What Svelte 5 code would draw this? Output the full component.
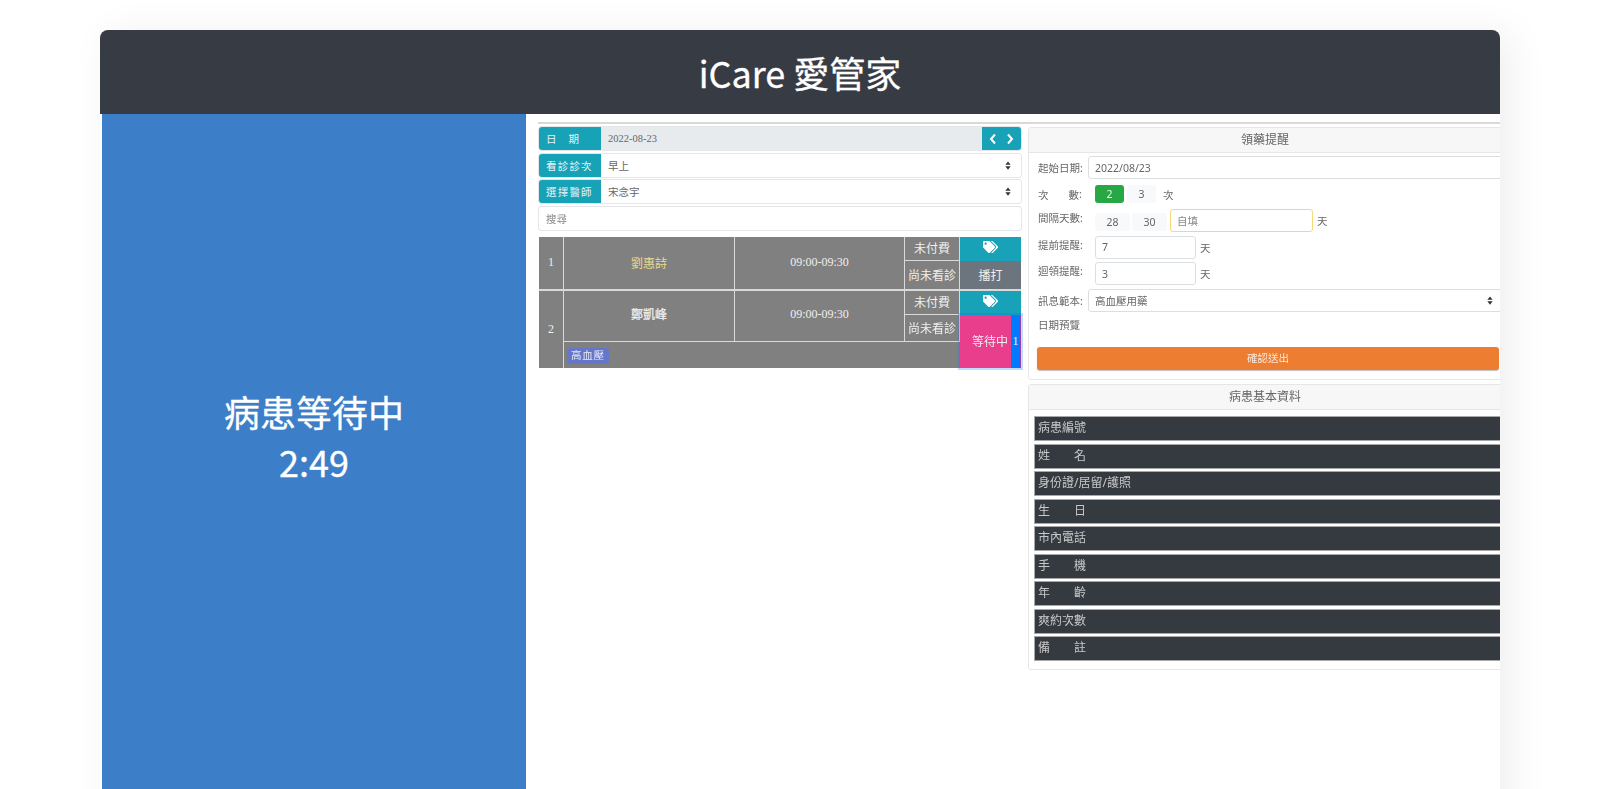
<script>
    const patientRows = ["病患編號", "姓名", "身份證/居留/護照", "生日", "市內電話", "手機", "年齡", "爽約次數", "備註"];
    const tagPath = "M497.941 225.941L286.059 14.059A48 48 0 0 0 252.118 0H48C21.49 0 0 21.49 0 48v204.118a48 48 0 0 0 14.059 33.941l211.882 211.882c18.744 18.745 49.136 18.746 67.882 0l204.118-204.118c18.745-18.745 18.745-49.137 0-67.882zM112 160c-26.51 0-48-21.49-48-48s21.49-48 48-48 48 21.49 48 48-21.49 48-48 48zm513.941 133.823L421.823 497.941c-18.745 18.745-49.137 18.745-67.882 0l-.36-.36L527.64 323.522c16.999-16.999 26.36-39.6 26.36-63.64s-9.362-46.641-26.36-63.64L331.397 0h48.721a48 48 0 0 1 33.941 14.059l211.882 211.882c18.745 18.745 18.745 49.137 0 67.882z";
</script>

{#snippet updown()}
    <svg class="updown" viewBox="0 0 8 12"><path d="M4 0.5 7.5 5H.5zM4 11.500 .5 7h7z" /></svg>
{/snippet}

{#snippet tags()}
    <svg class="tags" viewBox="0 0 640 512"><path d={tagPath} /></svg>
{/snippet}

<div class="page">
    <div class="card">
        <header class="title">iCare 愛管家</header>
        <div class="body">
            <aside class="status">
                <div>病患等待中</div>
                <div>2:49</div>
            </aside>
            <main class="shot">
                <div class="rule"></div>
                <div class="columns">
                    <section class="left">
                        <div class="group">
                            <span class="addon"><span class="just">日期</span></span>
                            <span class="value readonly serif">2022-08-23</span>
                            <span class="arrows">
                                <svg viewBox="0 0 8 12"><path d="M6 1.500 2 6l4 4.500" /></svg>
                                <svg viewBox="0 0 8 12"><path d="M2 1.500 6 6l-4 4.500" /></svg>
                            </span>
                        </div>
                        <div class="group">
                            <span class="addon spaced">看診診次</span>
                            <span class="value">早上 {@render updown()}</span>
                        </div>
                        <div class="group">
                            <span class="addon spaced">選擇醫師</span>
                            <span class="value">宋念宇 {@render updown()}</span>
                        </div>
                        <div class="group search">搜尋</div>

                        <table>
                            <colgroup>
                                <col style="width:25px" /><col style="width:171px" /><col style="width:170px" /><col style="width:55px" /><col style="width:61px" />
                            </colgroup>
                            <tbody>
                                <tr class="r1">
                                    <td rowspan="2">1</td>
                                    <td rowspan="2" class="vip">劉惠詩</td>
                                    <td rowspan="2">09:00-09:30</td>
                                    <td>未付費</td>
                                    <td class="teal">{@render tags()}</td>
                                </tr>
                                <tr class="r2">
                                    <td>尚未看診</td>
                                    <td class="call">播打</td>
                                </tr>
                                <tr class="r3">
                                    <td rowspan="3" class="plain">2</td>
                                    <td rowspan="2" class="strong">鄭凱峰</td>
                                    <td rowspan="2" class="lifted">09:00-09:30</td>
                                    <td>未付費</td>
                                    <td class="teal">{@render tags()}</td>
                                </tr>
                                <tr class="r4">
                                    <td>尚未看診</td>
                                    <td rowspan="2" class="waiting">
                                        <span class="wait-text">等待中</span>
                                        <span class="count">1</span>
                                    </td>
                                </tr>
                                <tr class="r5">
                                    <td colspan="3" class="note"><span class="pill">高血壓</span></td>
                                </tr>
                            </tbody>
                        </table>
                    </section>

                    <section class="right">
                        <div class="panel">
                            <div class="panel-head">領藥提醒</div>
                            <div class="form">
                                <div class="field date">
                                    <span class="lbl">起始日期:</span>
                                    <span class="box grow">2022/08/23</span>
                                </div>
                                <div class="field times">
                                    <span class="lbl"><span class="just">次數</span>:</span>
                                    <span class="chip on">2</span>
                                    <span class="chip">3</span>
                                    <span class="unit">次</span>
                                </div>
                                <div class="field gap">
                                    <span class="lbl">間隔天數:</span>
                                    <span class="chip wide">28</span>
                                    <span class="chip wide">30</span>
                                    <span class="box custom">自填</span>
                                    <span class="unit">天</span>
                                </div>
                                <div class="field short">
                                    <span class="lbl">提前提醒:</span>
                                    <span class="box days">7</span>
                                    <span class="unit">天</span>
                                </div>
                                <div class="field short">
                                    <span class="lbl">迴領提醒:</span>
                                    <span class="box days">3</span>
                                    <span class="unit">天</span>
                                </div>
                                <div class="field date">
                                    <span class="lbl">訊息範本:</span>
                                    <span class="box grow sel">高血壓用藥 {@render updown()}</span>
                                </div>
                                <div class="preview">日期預覽</div>
                                <div class="submit">確認送出</div>
                            </div>
                        </div>

                        <div class="panel second">
                            <div class="panel-head">病患基本資料</div>
                            <ul class="info">
                                {#each patientRows as row}
                                    <li>
                                        {#if row.length === 2}
                                            <span class="just">{row}</span>
                                        {:else}
                                            {row}
                                        {/if}
                                    </li>
                                {/each}
                            </ul>
                        </div>
                    </section>
                </div>
            </main>
        </div>
    </div>
</div>

<style>
    :global(html), :global(body) {
        margin: 0;
        background: #fff;
    }

    .page {
        height: 789px;
        overflow: hidden;
        padding: 30px 100px 0;
        box-sizing: border-box;
        font-family: "Noto Sans CJK TC", "Noto Sans", sans-serif;
    }

    .card {
        height: 800px;
        background: #fff;
        border-radius: 8px 8px 0 0;
        box-shadow: 10px 4px 40px rgba(0, 0, 0, 0.07);
    }

    .title {
        height: 84px;
        background: #373b43;
        color: #fff;
        border-radius: 8px 8px 0 0;
        font-size: 36px;
        -webkit-text-stroke: 0.3px #fff;
        line-height: 84px;
        text-align: center;
    }

    .body {
        display: flex;
        height: 716px;
        padding-left: 2px;
    }

    .status {
        width: 424px;
        flex: none;
        background: #3d7ec8;
        color: #fff;
        font-size: 36px;
        -webkit-text-stroke: 0.3px #fff;
        line-height: 50px;
        text-align: center;
        padding-top: 272px;
        box-sizing: border-box;
    }

    .shot {
        flex: 1;
        min-width: 0;
        overflow: hidden;
        padding: 8px 0 0 12px;
        color: #666;
        font-family: "Liberation Serif", "Noto Sans CJK TC", serif;
        font-size: 11px;
        filter: blur(0.45px);
    }

    .rule {
        height: 2px;
        background: #d9d9d9;
        margin-bottom: 3px;
    }

    .columns {
        display: flex;
        width: 980px;
    }

    .left {
        width: 482px;
        margin-left: 1px;
        flex: none;
    }

    .group {
        display: flex;
        height: 23px;
        margin-bottom: 3.700px;
        border-radius: 3px;
        box-sizing: border-box;
        overflow: hidden;
        box-shadow: 0 0 0 1px #e4e6e9;
        align-items: stretch;
    }

    .addon {
        width: 62px;
        flex: none;
        background: #17a2b8;
        color: #e8f4f6;
        display: flex;
        align-items: center;
        padding-left: 7px;
        box-sizing: border-box;
        font-size: 10.500px;
    }

    .spaced {
        letter-spacing: 1.200px;
    }

    .just {
        display: inline-block;
        width: 33px;
        text-align-last: justify;
    }

    .value {
        flex: 1;
        display: flex;
        justify-content: space-between;
        align-items: center;
        padding: 0 10px 0 7px;
        font-size: 10.500px;
        background: #fff;
    }

    .readonly {
        background: #e8ebee;
    }

    .serif {
        font-family: "Liberation Serif", serif;
    }

    .arrows {
        width: 39px;
        flex: none;
        background: #17a2b8;
        display: flex;
        align-items: center;
        justify-content: space-around;
        padding: 0 3px;
        box-sizing: border-box;
    }

    .arrows svg {
        width: 8px;
        height: 12px;
        fill: none;
        stroke: #fff;
        stroke-width: 2;
    }

    .updown {
        width: 6px;
        height: 9px;
        fill: #333;
    }

    .search {
        align-items: center;
        padding-left: 7px;
        color: #888;
        font-size: 10.500px;
        margin-bottom: 6.500px;
    }

    table {
        width: 482px;
        table-layout: fixed;
        border-collapse: separate;
        border-spacing: 0;
        background: #808080;
        color: #f0f0f0;
        font-size: 12px;
        text-align: center;
    }

    td {
        padding: 0;
        border-right: 1px solid #d9d9d9;
        border-bottom: 1px solid #d9d9d9;
    }

    td:last-child {
        border-right: none;
    }

    .r1 { height: 24px; }
    .r2 { height: 30px; }
    .r3 { height: 24px; }
    .r4 { height: 27px; }
    .r5 { height: 26px; }

    .r2 td, .r1 td[rowspan] {
        border-bottom-width: 2px;
    }

    .r5 td, .plain {
        border-bottom: none;
    }

    .vip {
        color: #e9d98f;
    }

    .strong {
        -webkit-text-stroke: 0.25px #f0f0f0;
        padding-bottom: 4px;
    }

    .lifted {
        padding-bottom: 2px;
    }

    .teal {
        background: #17a2b8;
        border: none;
    }

    .tags {
        width: 15px;
        height: 12px;
        fill: #fff;
        display: block;
        margin: 0 auto 3px;
    }

    .call {
        background: #6c757d;
    }

    .waiting {
        position: relative;
        background: #e83e8c;
        border: none;
        box-shadow: 0 0 0 2px rgba(0, 123, 255, 0.25);
        text-align: left;
    }

    .wait-text {
        padding-left: 12px;
    }

    .count {
        position: absolute;
        top: 0;
        right: 0;
        bottom: 0;
        width: 10px;
        background: #007bff;
        border: 1px solid #9a3fb0;
        border-width: 1px 1px 1px 0;
        box-sizing: border-box;
        display: flex;
        align-items: center;
        justify-content: center;
    }

    .note {
        text-align: left;
        padding: 2px 0 0 3px;
    }

    .pill {
        display: inline-block;
        background: #6676c8;
        color: #e6e8f6;
        border-radius: 3px;
        padding: 0 4px;
        font-size: 10.500px;
        line-height: 16px;
        letter-spacing: 0.800px;
    }

    .right {
        width: 490px;
        margin-left: 7px;
        flex: none;
        font-family: "Noto Sans", "Noto Sans CJK TC", sans-serif;
        font-size: 10.500px;
    }

    .panel {
        height: 253px;
        border: 1px solid #e6e6e6;
        border-radius: 3px;
        box-sizing: border-box;
    }

    .second {
        height: 286px;
        margin-top: 4px;
    }

    .panel-head {
        height: 25px;
        background: #f7f7f7;
        border-bottom: 1px solid #e6e6e6;
        text-align: center;
        line-height: 23px;
        font-size: 12px;
        box-sizing: border-box;
        padding-right: 16px;
    }

    .form {
        padding: 3px 18px 0 9px;
    }

    .field {
        display: flex;
        align-items: center;
        height: 23px;
        margin-bottom: 3.500px;
    }

    .lbl {
        width: 57px;
        flex: none;
        display: flex;
    }

    .lbl .just {
        width: 41px;
    }

    .date .lbl {
        width: 50px;
    }

    .gap .lbl, .short .lbl {
        align-self: flex-start;
        padding-top: 1px;
    }

    .box {
        height: 23px;
        box-sizing: border-box;
        border: 1px solid #dcdfe2;
        border-radius: 3px;
        padding: 0 6px;
        display: flex;
        align-items: center;
        background: #fff;
    }

    .grow {
        flex: 1;
        margin-right: -8px;
        padding-right: 13px;
    }

    .sel {
        justify-content: space-between;
    }

    .chip {
        width: 29px;
        height: 18px;
        margin-right: 3px;
        border-radius: 3px;
        background: #f8f9fa;
        display: flex;
        align-items: center;
        justify-content: center;
    }

    .chip.wide {
        width: 35px;
        margin-right: 2px;
        margin-top: 2px;
    }

    .chip.on {
        background: #28a745;
        color: #e8f6eb;
    }

    .custom {
        width: 143px;
        margin-left: 1px;
        border-color: #f6d878;
        color: #888;
    }

    .days {
        width: 101px;
    }

    .unit {
        margin-left: 4px;
    }

    .preview {
        height: 23px;
        line-height: 21px;
        margin-bottom: 9px;
    }

    .submit {
        height: 23px;
        margin-left: -1px;
        background: #ed7d31;
        color: #fbe9dc;
        border-radius: 3px;
        text-align: center;
        line-height: 23px;
        box-shadow: 0 1px 1px rgba(0, 0, 0, 0.25);
    }

    .info {
        list-style: none;
        margin: 0;
        padding: 6px 0 0 5px;
    }

    .info li {
        height: 25px;
        margin-bottom: 2.500px;
        box-sizing: border-box;
        background: #343a40;
        border: 1px solid #a8a8a8;
        border-right: none;
        color: #c8c8c8;
        font-size: 12px;
        line-height: 21px;
        padding-left: 3px;
    }

    .info .just {
        width: 48px;
    }
</style>
